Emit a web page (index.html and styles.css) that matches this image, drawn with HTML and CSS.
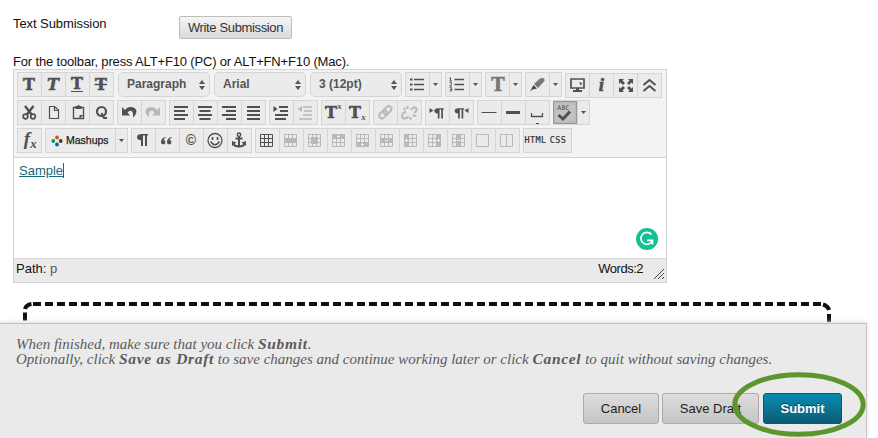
FILE: index.html
```html
<!DOCTYPE html>
<html lang="en">
<head>
<meta charset="utf-8">
<title>Text Submission</title>
<link rel="stylesheet" href="styles.css">
</head>
<body>
<svg class="defs" width="0" height="0" aria-hidden="true">
  <symbol id="cut" viewBox="0 0 23 23"><path d="M7 5L14 14M15.500 5L8.500 14" stroke-width="2.400"/><circle cx="7.500" cy="15.500" r="2.300" stroke-width="1.700"/><circle cx="15" cy="15.500" r="2.300" stroke-width="1.700"/></symbol>
  <symbol id="copy" viewBox="0 0 23 23"><path d="M7.500 5.500H12.500L16.500 9V17.500H7.500ZM12.500 5.500V9.500H16.500" stroke-width="1.200"/></symbol>
  <symbol id="paste" viewBox="0 0 23 23"><path d="M7.500 6.500H17.500V17.500H7.500Z" stroke-width="1.400"/><path d="M9.500 5H11L12.500 3.800L14 5H15.500V8H9.500ZM13.500 17.500V14H17.500Z" class="f"/></symbol>
  <symbol id="find" viewBox="0 0 23 23"><circle cx="11.500" cy="10.500" r="4.500" stroke-width="2.200"/><path d="M11.500 12L14 17H17" stroke-width="2"/></symbol>
  <symbol id="undo" viewBox="0 0 23 23"><path d="M4 6V14.500H12L9.500 11.500C12 8.500 15 9.500 15 13.500V16.500C20.500 12 19 6.500 13.500 6C10.500 5.700 8.500 7 7 9Z" class="f"/></symbol>
  <symbol id="left" viewBox="0 0 23 23"><path d="M4 6H18M4 10H15M4 14H18M4 18H15" stroke-width="2"/></symbol>
  <symbol id="center" viewBox="0 0 23 23"><path d="M4 6H18M5.500 10H16.500M4 14H18M5.500 18H16.500" stroke-width="2"/></symbol>
  <symbol id="right" viewBox="0 0 23 23"><path d="M4 6H18M8 10H18M4 14H18M8 18H18" stroke-width="2"/></symbol>
  <symbol id="full" viewBox="0 0 23 23"><path d="M5 6H18M5 10H18M5 14H18M5 18H18" stroke-width="2"/></symbol>
  <symbol id="indent" viewBox="0 0 23 23"><path d="M9 6H18M10 10H18M5 14H18M5 18H16" stroke-width="2"/><path d="M3.500 5V11L7.500 8Z" class="f"/></symbol>
  <symbol id="outdent" viewBox="0 0 23 23"><path d="M9 6H18M10 10H18M9 14H18M5 18H18" stroke-width="1.600"/><path d="M8 5V11L3.500 8Z" class="f"/></symbol>
  <symbol id="link" viewBox="0 0 23 23"><g transform="rotate(-45 11.500 11.500)" stroke-width="2"><rect x="4" y="8.500" width="9" height="5.500" rx="2.700"/><rect x="10" y="8.500" width="9" height="5.500" rx="2.700"/></g></symbol>
  <symbol id="unlink" viewBox="0 0 23 23"><path d="M8 10.500L5 12.500Q3 15 5 17Q8 18.500 10.500 15.500M13 9Q16 4.500 18.500 7.500Q19.500 10 16 12M14.500 14.500L18.500 15M12.500 16V19M9.500 5V8M5.500 7L7.500 9" stroke-width="2"/></symbol>
  <symbol id="pil" viewBox="0 0 23 23"><path d="M12 6H10.500Q6 6 6 9Q6 12.200 10 12.200V18H12V7.500H14V18H16V7.500H17V6Z" class="f"/></symbol>
  <symbol id="ltr" viewBox="0 0 23 23"><path d="M3.500 7V12L7.500 9.500Z" class="f"/><use href="#pil" transform="translate(3.200 2) scale(.86)"/></symbol>
  <symbol id="rtl" viewBox="0 0 23 23"><path d="M18.500 7V12L14.500 9.500Z" class="f"/><use href="#pil" transform="translate(-.5 2) scale(.86)"/></symbol>
  <symbol id="smile" viewBox="0 0 23 23"><circle cx="11" cy="11.500" r="7" stroke-width="1.300"/><path d="M8.500 8V11M13.500 8V11" stroke-width="1.700"/><path d="M6.500 12.500Q11 19 15.500 12.500" stroke-width="1.500"/></symbol>
  <symbol id="anchor" viewBox="0 0 23 23"><circle cx="11" cy="5.800" r="1.700" stroke-width="1.500"/><path d="M11 8V18M7.500 9.500H14.500M5 14Q6 17.500 11 17.500Q16 17.500 17 14" stroke-width="2"/><path d="M4 12L8.500 13.500L4 17ZM18 12L13.500 13.500L18 17Z" class="f"/></symbol>
  <symbol id="grid" viewBox="0 0 23 23"><path d="M4.500 5.500H16.500V17.500H4.500ZM8.500 5.500V17.500M12.500 5.500V17.500M4.500 9.500H16.500M4.500 13.500H16.500"/></symbol>
  <symbol id="rowp" viewBox="0 0 23 23"><path d="M4.500 5.500H16.500V17.500H4.500ZM8.500 5.500V17.500M12.500 5.500V17.500"/><path d="M4 9H17V14H4Z" class="f"/></symbol>
  <symbol id="cellp" viewBox="0 0 23 23"><use href="#grid"/><path d="M7 8H14V15H7Z" class="f"/></symbol>
  <symbol id="rbef" viewBox="0 0 23 23"><use href="#grid"/><path d="M4 5H17V10H4Z" class="f"/><path d="M10.500 6V9M9 7.500H12" stroke="#eee"/></symbol>
  <symbol id="raft" viewBox="0 0 23 23"><use href="#grid"/><path d="M4 13H17V18H4Z" class="f"/><path d="M10.500 14V17M9 15.500H12" stroke="#eee"/></symbol>
  <symbol id="rdel" viewBox="0 0 23 23"><use href="#grid"/><path d="M4 9H17V14H4Z" class="f"/><path d="M9 11.500H12" stroke="#eee"/></symbol>
  <symbol id="cbef" viewBox="0 0 23 23"><use href="#grid"/><path d="M4 5H9V18H4Z" class="f"/><path d="M6.500 10V13M5 11.500H8" stroke="#eee"/></symbol>
  <symbol id="caft" viewBox="0 0 23 23"><use href="#grid"/><path d="M12 5H17V18H12Z" class="f"/><path d="M14.500 10V13M13 11.500H16" stroke="#eee"/></symbol>
  <symbol id="cdel" viewBox="0 0 23 23"><use href="#grid"/><path d="M8 5H13V18H8Z" class="f"/><path d="M9 11.500H12" stroke="#eee"/></symbol>
  <symbol id="down" viewBox="0 0 11 23"><path d="M3 10H8L5.500 13Z" class="f"/></symbol>
  <symbol id="updown" viewBox="0 0 8 12"><path d="M1 5H7L4 1ZM1 7H7L4 11Z" class="f"/></symbol>
</svg>

<main class="page">
  <div class="heading">
    <span class="label">Text Submission</span>
    <button class="write">Write Submission</button>
  </div>
  <p class="hint">For the toolbar, press ALT+F10 (PC) or ALT+FN+F10 (Mac).</p>

  <section class="editor">
    <div class="toolbar">
      <div class="row">
        <div class="group">
          <i><svg><text x="11" y="17" class="t">T</text></svg></i>
          <i><svg><text x="11" y="17" class="t slant">T</text></svg></i>
          <i><svg><text x="11" y="16" class="t">T</text><path d="M5 18.500H17"/></svg></i>
          <i><svg><text x="11" y="17" class="t">T</text><path d="M4.500 11.500H17" stroke-width="1.500"/></svg></i>
        </div>
        <div class="select">Paragraph<svg><use href="#updown"/></svg></div>
        <div class="select">Arial<svg><use href="#updown"/></svg></div>
        <div class="select">3 (12pt)<svg><use href="#updown"/></svg></div>
        <div class="group">
          <i><svg><path d="M8 6.500H18M8 11.500H18M8 16.500H18" stroke-width="1.700"/><path d="M4 5.500H6.500V7.500H4ZM4 10.500H6.500V12.500H4ZM4 15.500H6.500V17.500H4Z" class="f"/></svg></i>
          <i class="drop"><svg><use href="#down"/></svg></i>
        </div>
        <div class="group">
          <i><svg><path d="M8.500 6.500H18M8.500 11.500H18M8.500 16.500H18" stroke-width="1.700"/><path d="M3.500 5.500L4.500 4.500V8M3.500 8H6M3.500 9.700H5.500V11.200L3.700 13H6M3.500 14.700H5.700V18H3.500M4 16.400H5.700" stroke-width=".9"/></svg></i>
          <i class="drop"><svg><use href="#down"/></svg></i>
        </div>
        <div class="group">
          <i class="mid"><svg><text x="12" y="18" class="t big">T</text></svg></i>
          <i class="drop"><svg><use href="#down"/></svg></i>
        </div>
        <div class="group">
          <i class="mid"><svg><path d="M8 11L14 5.500Q19 3.500 18.500 8L12 15Z" class="f"/><path d="M7.500 12L11 15.500L6.500 16.500L4 18.500Z" class="nib"/></svg></i>
          <i class="drop"><svg><use href="#down"/></svg></i>
        </div>
        <div class="group low">
          <i><svg><path d="M5 5H18V14H5Z" stroke-width="1.700"/><path d="M10 14H13V16H16V18H7V16H10ZM13 8L16 9L15 12Z" class="f"/></svg></i>
          <i><svg><text x="11.500" y="17" class="info">i</text></svg></i>
          <i><svg><path d="M5 5H10L8.500 6.500L11 9L9 11L6.500 8.500L5 10ZM19 5H14L15.500 6.500L13 9L15 11L17.500 8.500L19 10ZM5 18H10L8.500 16.500L11 14L9 12L6.500 14.500L5 13ZM19 18H14L15.500 16.500L13 14L15 12L17.500 14.500L19 13Z" class="f"/></svg></i>
          <i><svg><path d="M5.500 11L11.500 6L17.500 11M5.500 17L11.500 12L17.500 17" stroke-width="2"/></svg></i>
        </div>
      </div>

      <div class="row">
        <div class="group">
          <i><svg><use href="#cut"/></svg></i><i><svg><use href="#copy"/></svg></i><i><svg><use href="#paste"/></svg></i><i><svg><use href="#find"/></svg></i>
        </div>
        <div class="group">
          <i><svg><use href="#undo"/></svg></i><i class="off"><svg><use href="#undo" transform="translate(22 0) scale(-1 1)"/></svg></i>
        </div>
        <div class="group">
          <i><svg><use href="#left"/></svg></i><i><svg><use href="#center"/></svg></i><i><svg><use href="#right"/></svg></i><i><svg><use href="#full"/></svg></i>
        </div>
        <div class="group">
          <i><svg><use href="#indent"/></svg></i><i class="off"><svg><use href="#outdent"/></svg></i>
        </div>
        <div class="group">
          <i><svg><text x="9" y="17" class="t">T</text><text x="17.500" y="8" class="x">x</text></svg></i><i><svg><text x="9" y="17" class="t">T</text><text x="17.500" y="18.500" class="x">x</text></svg></i>
        </div>
        <div class="group off">
          <i><svg><use href="#link"/></svg></i><i><svg><use href="#unlink"/></svg></i>
        </div>
        <div class="group">
          <i><svg><use href="#ltr"/></svg></i><i><svg><use href="#rtl"/></svg></i>
        </div>
        <div class="group">
          <i><svg><path d="M3.500 11.500H18.500"/></svg></i><i><svg><path d="M4 11.500H18" stroke-width="3"/></svg></i><i><svg><path d="M5.500 12V15.500H16.500V12" stroke-width="1.300"/><path d="M10 22.500H13"/></svg></i>
        </div>
        <div class="group">
          <i class="on"><svg><text x="9.500" y="8" class="abc">ABC</text><path d="M4.500 13L9 17L16 9.500" stroke-width="3"/></svg></i>
          <i class="drop"><svg><use href="#down"/></svg></i>
        </div>
      </div>

      <div class="row">
        <div class="group"><i><svg><text x="9" y="15.500" class="fx">f</text><text x="15.500" y="18.500" class="x fxs">x</text></svg></i></div>
        <div class="group">
          <i class="mashups"><svg viewBox="0 0 12 12"><circle cx="6" cy="2.500" r="1.900" fill="#d25a0c"/><circle cx="2.300" cy="6" r="1.900" fill="#16905f"/><circle cx="9.700" cy="6" r="1.900" fill="#443a35"/><circle cx="6" cy="9.500" r="1.900" fill="#08629c"/></svg>Mashups</i>
          <i class="drop"><svg><use href="#down"/></svg></i>
        </div>
        <div class="group">
          <i><svg><use href="#pil" transform="translate(-1 -1)"/></svg></i>
          <i><svg><path d="M9.500 8Q5 9 5 13A2.200 2.200 0 1 0 7.500 11Q7.500 9.500 10 8.500ZM15.500 8Q11 9 11 13A2.200 2.200 0 1 0 13.500 11Q13.500 9.500 16 8.500Z" class="f"/></svg></i>
          <i><svg><text x="11" y="16" class="cr">©</text></svg></i>
          <i><svg><use href="#smile"/></svg></i><i><svg><use href="#anchor"/></svg></i>
        </div>
        <div class="group tables">
          <i class="dark"><svg><use href="#grid"/></svg></i><i><svg><use href="#rowp"/></svg></i><i><svg><use href="#cellp"/></svg></i><i><svg><use href="#rbef"/></svg></i><i><svg><use href="#raft"/></svg></i><i><svg><use href="#rdel"/></svg></i><i><svg><use href="#cbef"/></svg></i><i><svg><use href="#caft"/></svg></i><i><svg><use href="#cdel"/></svg></i><i><svg><path d="M4.500 5.500H16.500V17.500H4.500Z"/></svg></i><i><svg><path d="M4.500 5.500H16.500V17.500H4.500ZM10.500 5.500V17.500"/></svg></i>
        </div>
        <div class="group code"><i>HTML</i><i class="plain">CSS</i></div>
      </div>
    </div>
    <div class="content"><a>Sample</a><svg class="check" viewBox="0 0 22 22"><circle cx="11" cy="11" r="11" fill="#15bf94"/><path d="M15.500 6.500A6 6 0 1 0 16.500 12.500M11 12.300H16.500V16.500" fill="none" stroke="#fff" stroke-width="1.700"/></svg></div>
    <div class="status"><span>Path: <b>p</b></span><span class="words">Words:2<svg class="grip" viewBox="0 0 12 12"><path d="M1 11L11 1M5 11L11 5M9 11L11 9"/></svg></span></div>
  </section>

  <svg class="dropzone" viewBox="0 0 808 21"><path d="M10 2H798" stroke-dasharray="8 4"/><path d="M2 7Q3 3 8.500 2M800 2.500Q805 4 806 8M2 10.500V18.500M806 12V20"/></svg>
</main>

<footer class="bar">
  <p>When finished, make sure that you click <b>Submit</b>.</p>
  <p>Optionally, click <b>Save as Draft</b> to save changes and continue working later or click <b>Cancel</b> to quit without saving changes.</p>
  <div class="actions">
    <button class="cancel">Cancel</button>
    <button class="draft">Save Draft</button>
    <button class="submit">Submit</button>
  </div>
  <svg class="ring" viewBox="0 0 134 66"><ellipse cx="67" cy="32.500" rx="64.200" ry="29.800"/></svg>
</footer>
</body>
</html>
```

FILE: styles.css
```css
* { box-sizing: border-box; }
body { margin: 0; height: 438px; overflow: hidden; display: flex; flex-direction: column; background: #fff; color: #111; font: 13px/15px "Liberation Sans", Arial, sans-serif; }
p { margin: 0; }
button { font: inherit; padding: 0; }
.defs { position: absolute; }
.page { height: 323px; padding: 16px 0 0 13px; flex: none; }
.heading { display: flex; height: 38px; }
.label { width: 166px; letter-spacing: -.08px; }
.write { width: 113px; height: 23px; border: 1px solid #bdbdbd; border-radius: 2px; color: #333; background: linear-gradient(#f5f5f5, #dadada); letter-spacing: -.36px; }
.hint { height: 15px; white-space: nowrap; letter-spacing: -.16px; }

.editor { width: 654px; height: 214px; border: 1px solid #d4d4d4; display: flex; flex-direction: column; }
.toolbar { height: 88px; flex: none; background: #f3f3f3; border-bottom: 1px solid #d4d4d4; padding: 2px 0 0 3px; display: flex; flex-direction: column; gap: 3px; }
.row { display: flex; gap: 3px; height: 25px; }
.group { display: flex; height: 25px; border: 1px solid #d5d5d5; border-left: 0; background: #ebebeb; color: #505050; }
.group i { width: 24px; height: 23px; border-left: 1px solid #d5d5d5; font-style: normal; flex: none; }
.group svg { display: block; width: 23px; height: 23px; fill: none; stroke: currentColor; }
.group .drop { width: 12px; }
.group .drop svg { width: 11px; }
.low { position: relative; top: 1px; }
.group svg text, .f { fill: currentColor; stroke: none; }
.group text { text-anchor: middle; }
.group svg .t { font: bold 16px "DejaVu Serif", "Liberation Serif", serif; stroke: currentColor; stroke-width: .5px; }
.group svg .slant { font-style: italic; }
.group svg .big { font-size: 18px; }
.mid { color: #777; }
.nib { fill: #444; stroke: none; }
.x { font: italic bold 9px "Liberation Serif", serif; }
.info { font: italic bold 19px "Liberation Serif", serif; }
.group svg .info { stroke: currentColor; stroke-width: .6px; }
.fx { font: italic bold 19px "Liberation Serif", serif; }
.fxs { font-size: 13px; }
.cr { font: bold 14px "Liberation Sans", sans-serif; }
.abc { font: 6.5px "DejaVu Sans Mono", monospace; letter-spacing: .2px; }
.off, .off i, .tables { color: #b9b9b9; }
.dark { color: #505050; }
.group .on { background: #c2c2c2; border: 1px solid #999; box-shadow: inset 0 0 3px #aaa; }
.group .on svg { width: 22px; height: 21px; }
.group .mashups { width: 70px; display: flex; align-items: center; gap: 3px; padding-left: 5px; color: #222; font-size: 10.5px; -webkit-text-stroke: .25px #222; }
.group .mashups svg { width: 12px; height: 12px; stroke: none; }
.code i { font: 8.5px/23px "DejaVu Sans Mono", monospace; text-align: center; letter-spacing: .4px; color: #333; -webkit-text-stroke: .2px; }
.code .plain { border-left-color: #ebebeb; padding-right: 3px; }
.select { width: 92px; height: 25px; margin-left: 1px; border: 1px solid #d5d5d5; border-radius: 5px; background: #ebebeb; color: #555; font-weight: bold; font-size: 12px; line-height: 23px; padding: 0 3px 0 8px; display: flex; justify-content: space-between; align-items: center; }
.select svg { width: 8px; height: 12px; fill: currentColor; }

.content { height: 100px; flex: none; position: relative; padding: 5px; }
.content a { display: inline-block; color: #13697e; text-decoration: underline; border-right: 1px solid #13697e; height: 15px; }
.check { position: absolute; right: 8px; bottom: 8px; width: 22px; height: 22px; }
.status { flex: 1; border-top: 1px solid #d4d4d4; background: #eaeaea; display: flex; justify-content: space-between; padding: 2px 1px 0 2px; }
.status b { font-weight: normal; color: #555; }
.words { display: flex; gap: 10px; letter-spacing: -.5px; }
.grip { width: 12px; height: 12px; margin-top: 7px; stroke: #444; fill: none; }
.dropzone { display: block; margin: 19px 0 0 10px; width: 808px; height: 21px; fill: none; stroke: #111; stroke-width: 4; }

.bar { position: relative; width: 867px; height: 115px; border-top: 1px solid #c0c0c0; border-right: 1px solid #c8c8c8; background: #eaeaea; box-shadow: 0 -1px 4px #ddd; padding: 12px 0 0 16px; color: #5b5b5b; font: italic 15px/15px "Liberation Serif", serif; }
.bar p { white-space: nowrap; height: 15px; }
.bar b { font-size: 15.5px; letter-spacing: .7px; line-height: 1; }
.actions { display: flex; gap: 3px; justify-content: flex-end; margin: 27px 24px 0 0; font: 13px "Liberation Sans", sans-serif; }
.actions button { height: 31px; border: 1px solid #aaa; border-radius: 3px; background: linear-gradient(#ddd, #c5c5c5); color: #222; }
.actions .cancel { width: 76px; }
.actions .draft { width: 97px; }
.actions .submit { width: 79px; margin-left: 1px; border-color: #10566c; background: linear-gradient(#078db0, #0b5c75); color: #fff; font-weight: bold; text-shadow: 0 -1px #234; }
.ring { position: absolute; left: 732px; top: 48px; width: 134px; height: 66px; fill: none; stroke: #5c962d; stroke-width: 5; }
```
